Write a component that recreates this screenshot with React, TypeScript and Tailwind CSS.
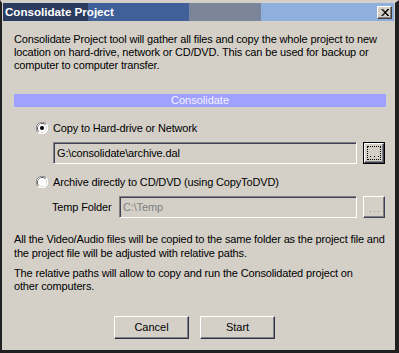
import React from 'react';

const font = "font-['Liberation_Sans',Arial,sans-serif]";

function Radio({ checked }: { checked: boolean }) {
  return (
    <svg width="12" height="12" viewBox="0 0 12 12" className="shrink-0">
      <circle cx="6" cy="6" r="6" fill="#ffffff" />
      <path d="M1.76 10.24 A6 6 0 0 1 10.24 1.76" fill="none" stroke="#808080" strokeWidth="1" />
      <path d="M2.5 9.5 A5 5 0 0 1 9.5 2.5" fill="none" stroke="#404040" strokeWidth="1" />
      <path d="M10.24 1.76 A6 6 0 0 1 1.76 10.24" fill="none" stroke="#ffffff" strokeWidth="1" />
      <path d="M9.5 2.5 A5 5 0 0 1 2.5 9.5" fill="none" stroke="#d4d0c8" strokeWidth="1" />
      <circle cx="6" cy="6" r="4" fill="#ffffff" />
      {checked && <circle cx="6" cy="6" r="2" fill="#000000" />}
    </svg>
  );
}

function Field({ value, disabled, width }: { value: string; disabled?: boolean; width: string }) {
  return (
    <div
      className={`${width} h-[22px] flex items-center border border-t-[#808080] border-l-[#808080] border-b-white border-r-white bg-[#d4d0c8] shadow-[inset_1px_1px_0_#404058] pl-[3px] text-[11px] ${
        disabled ? 'text-[#808080]' : 'text-black'
      }`}
    >
      {value}
    </div>
  );
}

// three 1px dots, drawn as boxes so they stay crisp
function Dots({ color }: { color: string }) {
  return (
    <div className="flex gap-[3px]">
      <div className={`w-px h-px ${color}`} />
      <div className={`w-px h-px ${color}`} />
      <div className={`w-px h-px ${color}`} />
    </div>
  );
}

function Browse({ focused }: { focused?: boolean }) {
  if (focused) {
    return (
      <div className="w-[22px] h-[22px] border border-black bg-[#d4d0c8] flex">
        <div className="flex-1 border border-t-white border-l-white border-b-[#404058] border-r-[#404058] shadow-[inset_-1px_-1px_0_#808080] p-[2px] flex">
          <div className="flex-1 border border-dotted border-black flex items-end justify-center pb-[2px]">
            <Dots color="bg-black" />
          </div>
        </div>
      </div>
    );
  }
  return (
    <div className="w-[22px] h-[22px] border border-t-white border-l-white border-b-[#404058] border-r-[#404058] shadow-[inset_-1px_-1px_0_#808080] bg-[#d4d0c8] flex items-end justify-center pb-[5px]">
      <Dots color="bg-[#909090]" />
    </div>
  );
}

function PushButton({ label }: { label: string }) {
  return (
    <button className="w-[75px] h-[23px] border border-t-white border-l-white border-b-[#303048] border-r-[#303048] shadow-[inset_-1px_-1px_0_#808080] bg-[#d4d0c8] text-[11px] text-black">
      {label}
    </button>
  );
}

export default function App() {
  return (
    <div
      className={`${font} w-[399px] h-[353px] bg-[#d4d0c8] border-l-2 border-l-[#202020] border-r-[4px] border-r-[#202020] border-b-[3px] border-b-[#202020] border-t-[3px] border-t-[#d4d0c8] flex flex-col overflow-hidden`}
    >
      {/* Title bar */}
      <div className="px-px">
        <div className="h-[18px] flex items-center relative bg-[linear-gradient(to_right,#2a3b5f_0px,#2a3b5f_85px,#40609a_85px,#40609a_186px,#7a8599_186px,#7a8599_258px,#8fafdc_258px)]">
          <span className="pl-[2px] text-[11.6px] font-bold text-white">Consolidate Project</span>
          <div className="ml-auto mr-[2px] w-[15px] h-[13px] bg-[#d4d0c8] border border-t-white border-l-white border-b-[#404040] border-r-[#404040] shadow-[inset_-1px_-1px_0_#808080] flex items-center justify-center">
            <svg width="8" height="7" viewBox="0 0 8 7">
              <path d="M0.5 0 L7 7 M1.5 0 L8 7 M7 0 L0.5 7 M8 0 L1.5 7" stroke="#000" strokeWidth="1" />
            </svg>
          </div>
        </div>
      </div>

      {/* Body */}
      <div className="flex flex-col pl-[12px] pr-[9px] text-[11px] tracking-[-0.15px] text-black">
        <p className="pt-[12px] leading-[13px] whitespace-nowrap">
          Consolidate Project tool will gather all files and copy the whole project to new
          <br />
          location on hard-drive, network or CD/DVD. This can be used for backup or
          <br />
          computer to computer transfer.
        </p>

        <div className="mt-[22px] h-[13px] bg-[#a0a0ff] flex items-center justify-center text-[11px] leading-[13px] text-[#f4f4ff] tracking-[0px]">
          Consolidate
        </div>

        <div className="mt-[15px] h-[12px] pl-[22px] flex items-center gap-[5px]">
          <Radio checked />
          <span>Copy to Hard-drive or Network</span>
        </div>

        <div className="mt-[8px] pl-[39px] flex items-center gap-[6px]">
          <Field value="G:\consolidate\archive.dal" width="w-[304px]" />
          <Browse focused />
        </div>

        <div className="mt-[12px] h-[12px] pl-[22px] flex items-center gap-[5px]">
          <Radio checked={false} />
          <span>Archive directly to CD/DVD (using CopyToDVD)</span>
        </div>

        <div className="mt-[8px] pl-[38px] flex items-center">
          <span className="w-[67px]">Temp Folder</span>
          <Field value="C:\Temp" disabled width="w-[238px]" />
          <div className="ml-[6px]">
            <Browse />
          </div>
        </div>

        <p className="mt-[15px] leading-[13.5px] whitespace-nowrap">
          All the Video/Audio files will be copied to the same folder as the project file and
          <br />
          the project file will be adjusted with relative paths.
        </p>
        <p className="mt-[7px] leading-[13px] whitespace-nowrap">
          The relative paths will allow to copy and run the Consolidated project on
          <br />
          other computers.
        </p>

        <div className="mt-[23px] pl-[100px] flex gap-[11px] tracking-[0px]">
          <PushButton label="Cancel" />
          <PushButton label="Start" />
        </div>
      </div>
    </div>
  );
}
